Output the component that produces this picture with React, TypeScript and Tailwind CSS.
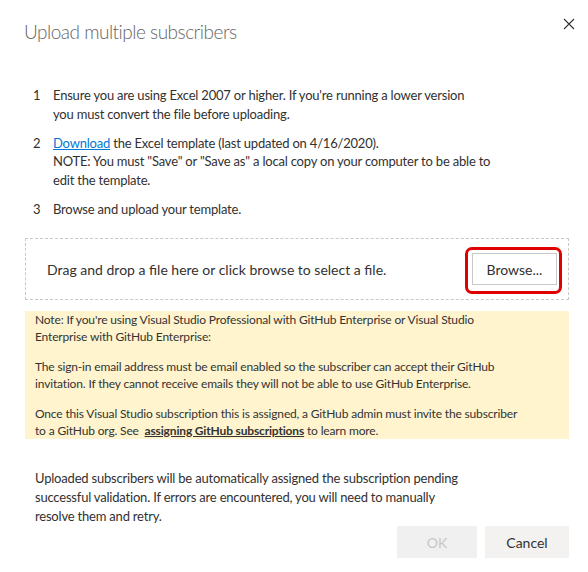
import React from "react";

export default function App() {
  const font = { fontFamily: 'Lato, "Noto Sans", Arial, sans-serif' };
  return (
    <div className="relative w-[588px] h-[572px] bg-white overflow-hidden text-[#323130]" style={font}>
      <button className="absolute left-[563px] top-[18px] w-[12px] h-[12px] flex items-center justify-center" aria-label="Close">
        <svg width="12" height="12" viewBox="0 0 12 12">
          <path d="M1 1 L11 11 M11 1 L1 11" stroke="#333" strokeWidth="1.1" fill="none" />
        </svg>
      </button>
      <div className="pl-[24px] pt-[18px]">
        <h1 className="text-[19px] leading-[28px] font-light tracking-[-0.5px] text-[#666]">Upload multiple subscribers</h1>
      </div>
      <ol className="mt-[40px] pl-[33px] pr-[20px] text-[13px] leading-[18.5px] tracking-[-0.2px] flex flex-col gap-[10.5px]">
        <li className="flex">
          <span className="w-[20px] shrink-0">1</span>
          <span>Ensure you are using Excel 2007 or higher. If you're running a lower version<br />you must convert the file before uploading.</span>
        </li>
        <li className="flex">
          <span className="w-[20px] shrink-0">2</span>
          <span>
            <a className="text-[#0078d4] underline">Download</a> the Excel template (last updated on 4/16/2020).<br />
            NOTE: You must "Save" or "Save as" a local copy on your computer to be able to<br />edit the template.
          </span>
        </li>
        <li className="flex">
          <span className="w-[20px] shrink-0">3</span>
          <span>Browse and upload your template.</span>
        </li>
      </ol>
      <div className="mt-[20px] ml-[25px] w-[544px] h-[62px] border border-dashed border-[#c8c8c8] flex items-center justify-between pl-[21px] pr-[6px]">
        <span className="text-[14px]">Drag and drop a file here or click browse to select a file.</span>
        <div className="mt-[3px] rounded-[7px] border-[3px] border-[#e00000] pt-[3px] pr-[2px] pb-[6px] pl-[4px]">
          <button className="w-[85px] h-[32px] border border-[#c8c8c8] bg-white text-[14px] text-[#323130]">Browse...</button>
        </div>
      </div>
      <div className="mt-[11px] ml-[25px] w-[544px] h-[128px] bg-[#fff4ce] pl-[10px] pr-[10px] pt-[1px] text-[12px] leading-[16.5px] tracking-[-0.16px] text-[#333] flex flex-col gap-[14px]">
        <p>Note: If you're using Visual Studio Professional with GitHub Enterprise or Visual Studio<br />Enterprise with GitHub Enterprise:</p>
        <p>The sign-in email address must be email enabled so the subscriber can accept their GitHub<br />invitation. If they cannot receive emails they will not be able to use GitHub Enterprise.</p>
        <p>Once this Visual Studio subscription this is assigned, a GitHub admin must invite the subscriber<br />to a GitHub org. See&nbsp; <a className="font-bold underline">assigning GitHub subscriptions</a> to learn more.</p>
      </div>
      <p className="mt-[30px] ml-[35px] text-[13px] leading-[19px] tracking-[-0.2px]">
        Uploaded subscribers will be automatically assigned the subscription pending<br />successful validation. If errors are encountered, you will need to manually<br />resolve them and retry.
      </p>
      <div className="absolute left-[397px] top-[526px] flex gap-[8px]">
        <button className="w-[80px] h-[32px] bg-[#f0f0f0] text-[#c8c6c4] text-[14px]">OK</button>
        <button className="w-[84px] h-[32px] bg-[#f3f2f1] text-[#323130] text-[14px]">Cancel</button>
      </div>
    </div>
  );
}
